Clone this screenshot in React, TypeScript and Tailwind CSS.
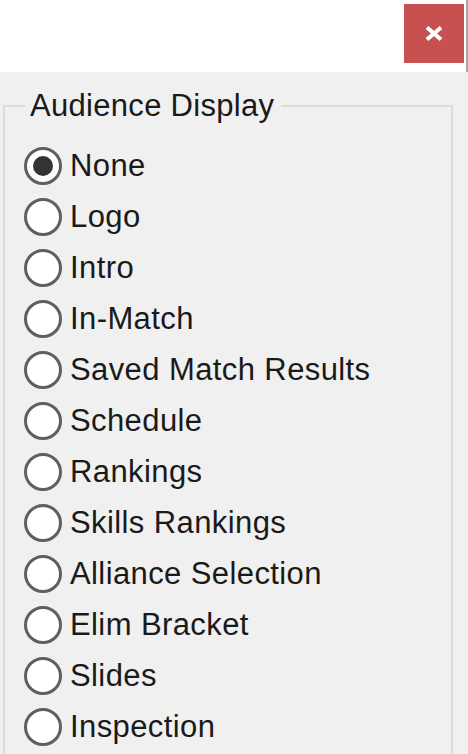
import React, { useState } from 'react';

const options = [
  'None',
  'Logo',
  'Intro',
  'In-Match',
  'Saved Match Results',
  'Schedule',
  'Rankings',
  'Skills Rankings',
  'Alliance Selection',
  'Elim Bracket',
  'Slides',
  'Inspection',
];

const App: React.FC = () => {
  const [selected, setSelected] = useState('None');

  return (
    <div
      className="w-[468px] h-[754px] overflow-hidden bg-[#f0f0f0] flex flex-col text-[#1a1a1a]"
      style={{ fontFamily: '"Liberation Sans", Arial, sans-serif' }}
    >
      {/* title strip */}
      <div className="h-[72px] shrink-0 bg-white flex items-start justify-end">
        <button className="mt-[4px] w-[60px] h-[59px] bg-[#c75050] flex items-center justify-center">
          <svg width="18" height="15" viewBox="0 0 18 15">
            <path d="M2 1.5 L16 13.5 M16 1.5 L2 13.5" stroke="#fff" strokeWidth="4" strokeLinecap="butt" />
          </svg>
        </button>
        <div className="ml-[2px] w-[2px] h-[72px] bg-[#a8a8a8]" />
      </div>

      {/* group box runs past the bottom of the window */}
      <fieldset className="ml-[3px] mt-[16px] w-[450px] h-[760px] shrink-0 border-2 border-[#dcdcdc] min-w-0">
        <legend className="ml-[20px] pl-[5px] pr-[7px] text-[31px] leading-[36px] tracking-[0.3px]">
          Audience Display
        </legend>
        <div className="pt-[16px] flex flex-col">
          {options.map((opt) => (
            <label
              key={opt}
              className="h-[51px] flex items-center cursor-default"
              onClick={() => setSelected(opt)}
            >
              <span className="ml-[19px] w-[38px] h-[38px] shrink-0 rounded-full border-[3px] border-[#5f5f5f] bg-white flex items-center justify-center">
                {selected === opt && <span className="w-[20px] h-[20px] rounded-full bg-[#333333]" />}
              </span>
              <span className="ml-[8px] text-[31px] leading-[36px] tracking-[0.4px] whitespace-nowrap">{opt}</span>
            </label>
          ))}
        </div>
      </fieldset>
    </div>
  );
};

export default App;
